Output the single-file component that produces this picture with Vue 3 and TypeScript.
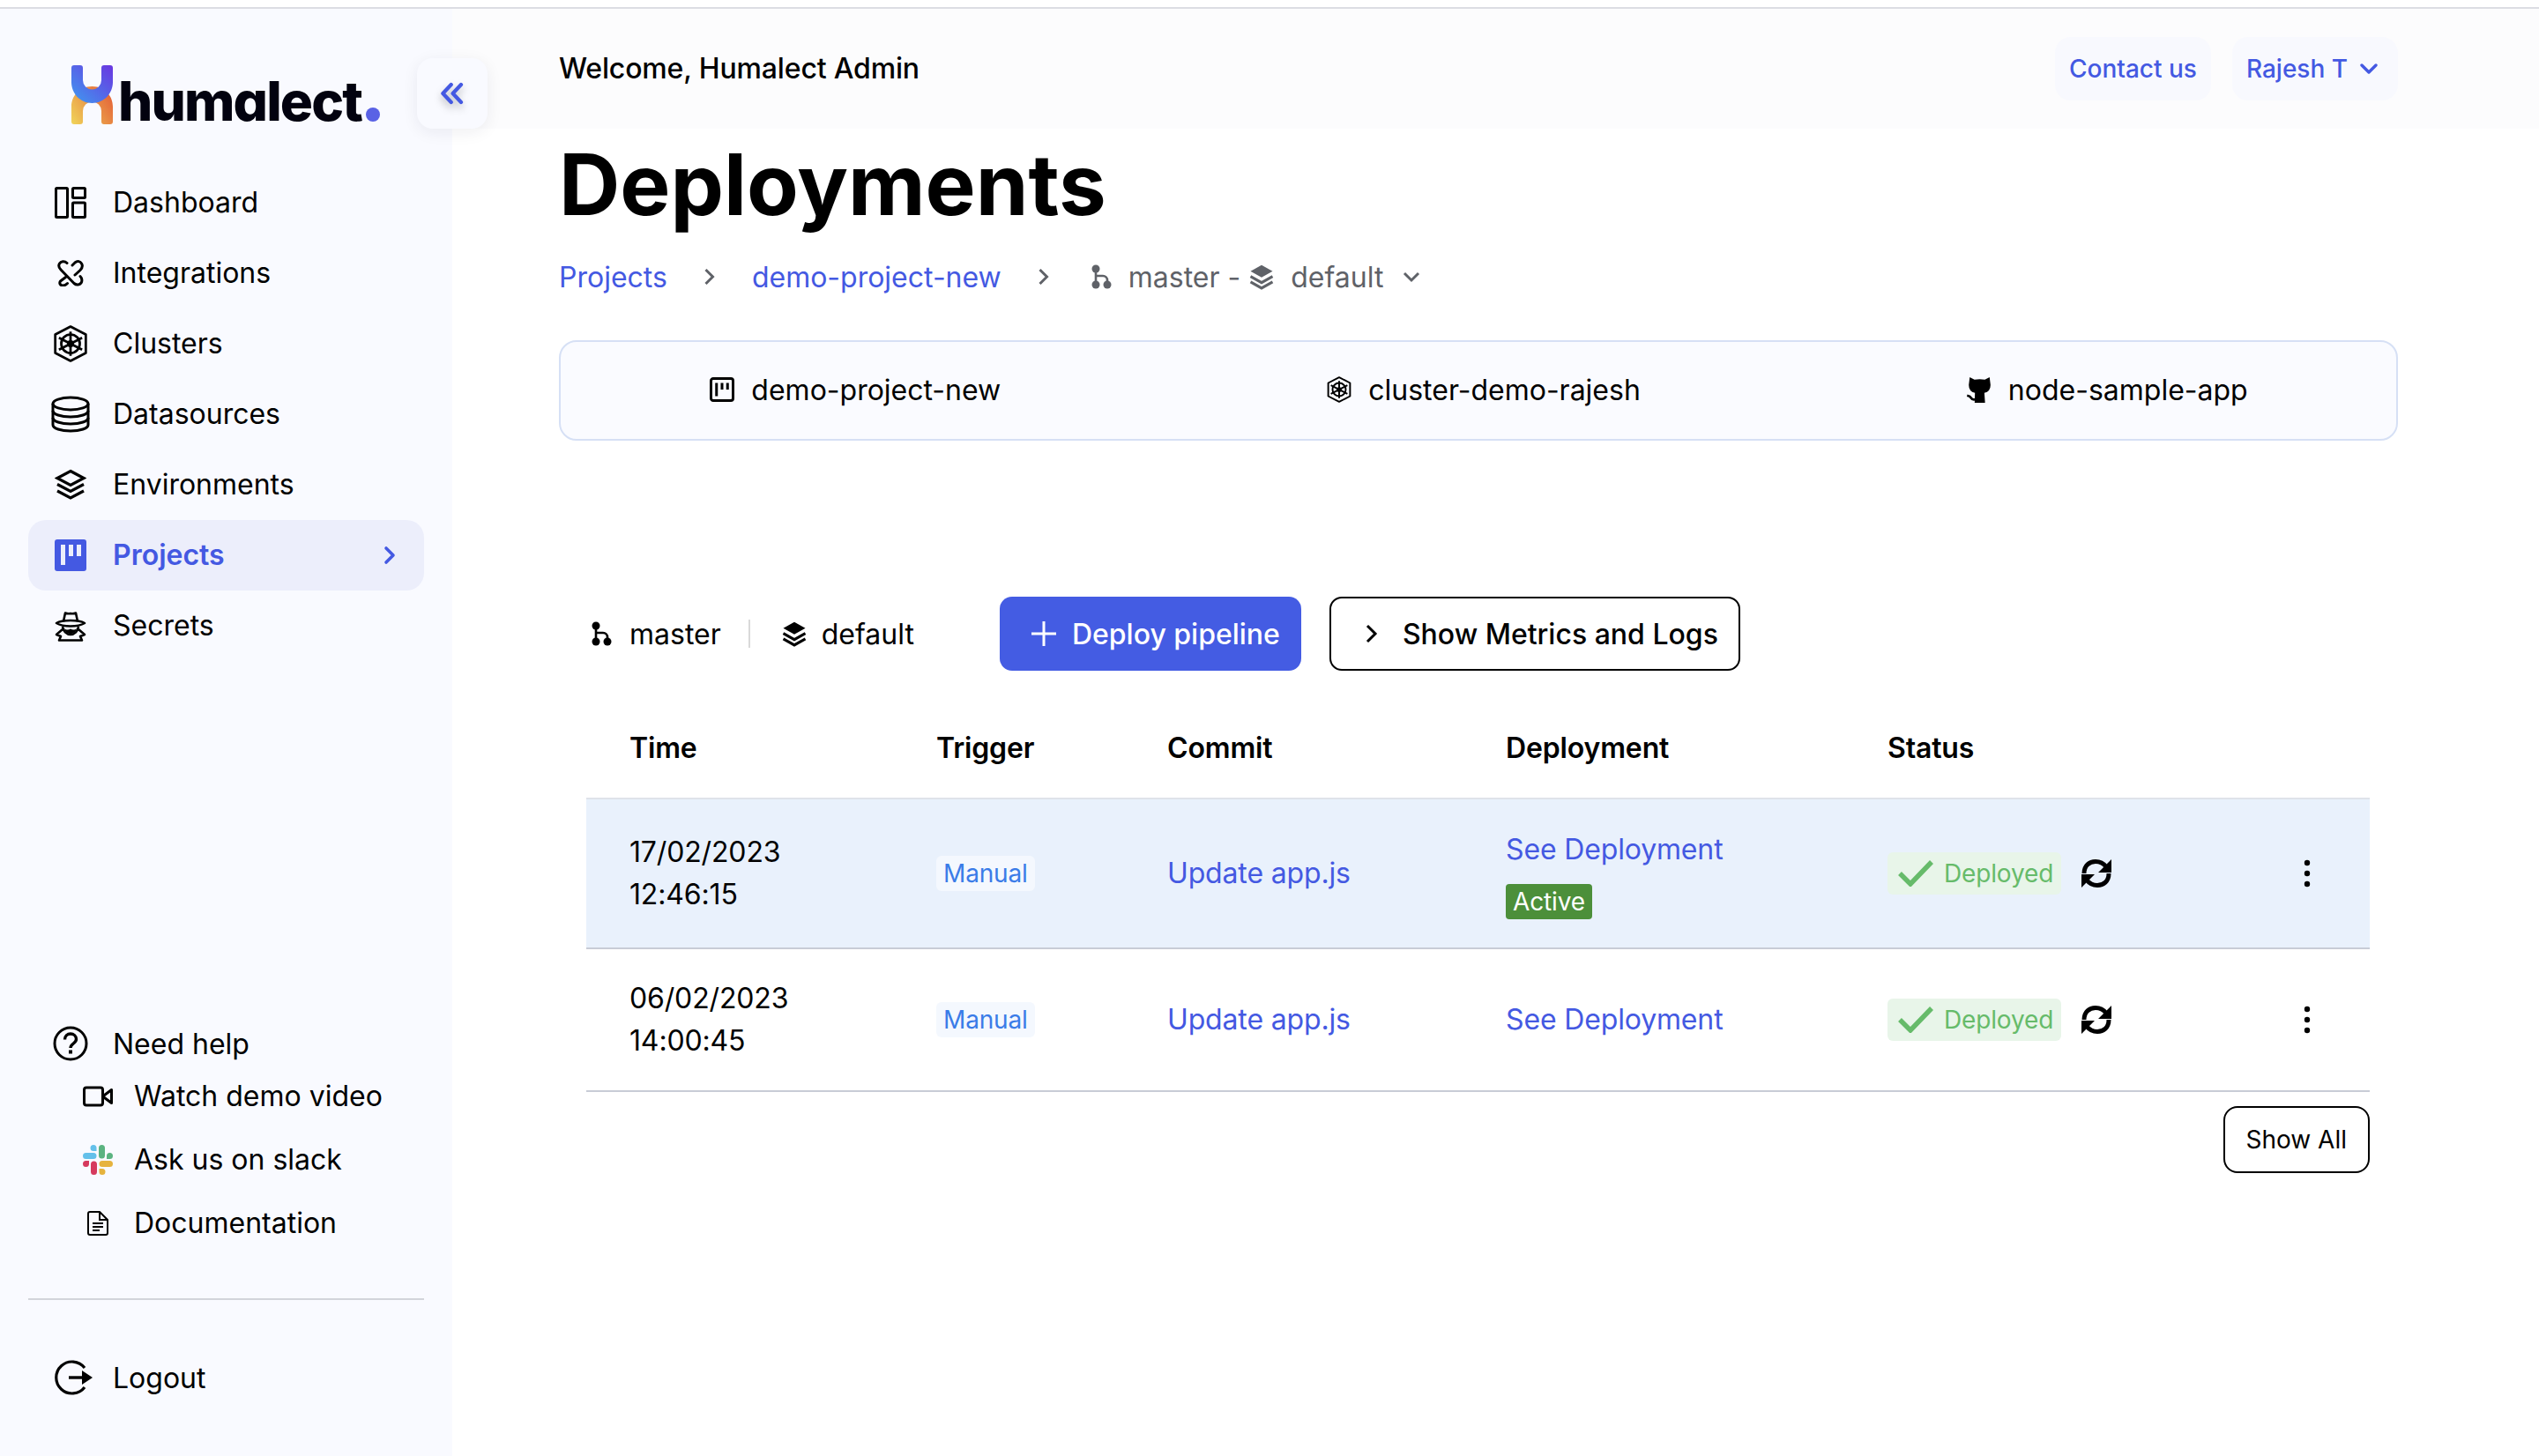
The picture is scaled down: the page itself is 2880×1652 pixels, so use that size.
<script setup lang="ts">
interface NavItem {
  label: string
  icon: string
  active?: boolean
}

interface Deployment {
  date: string
  time: string
  active: boolean
}

const navItems: NavItem[] = [
  { label: 'Dashboard', icon: 'dashboard' },
  { label: 'Integrations', icon: 'integrations' },
  { label: 'Clusters', icon: 'cluster' },
  { label: 'Datasources', icon: 'database' },
  { label: 'Environments', icon: 'layers' },
  { label: 'Projects', icon: 'board', active: true },
  { label: 'Secrets', icon: 'spy' },
]

const deployments: Deployment[] = [
  { date: '17/02/2023', time: '12:46:15', active: true },
  { date: '06/02/2023', time: '14:00:45', active: false },
]
</script>

<template>
  <div class="page">
    <!-- icon sprite -->
    <svg class="sprite" aria-hidden="true">
      <defs>
        <linearGradient id="logo-top" x1="0" y1="1" x2="1" y2="0">
          <stop offset="0" stop-color="#3f9bf0" />
          <stop offset="1" stop-color="#6a35e0" />
        </linearGradient>
        <linearGradient id="logo-bottom" x1="0" y1="1" x2="1" y2="0.400">
          <stop offset="0" stop-color="#f0d55a" />
          <stop offset="1" stop-color="#e5693a" />
        </linearGradient>
      </defs>
      <symbol id="i-dashboard" viewBox="0 0 36 36">
        <g fill="none" stroke="currentColor" stroke-width="3">
          <rect x="1.500" y="1.500" width="13" height="33" rx="1" />
          <rect x="20.500" y="1.500" width="14" height="11" rx="1" />
          <rect x="20.500" y="18" width="14" height="16.500" rx="1" />
        </g>
      </symbol>
      <symbol id="i-integrations" viewBox="0 0 30 30">
        <g fill="none" stroke="currentColor" stroke-width="3" stroke-linecap="round" stroke-linejoin="round">
          <path d="M11 3.500C8 .5 4 1.500 2.500 4S2 9 4 11L19 26.500c3 2.500 6.500 1.500 8-.5s1-5.500-1-7.500" />
          <path d="M17 6 20 3c3-2.500 6-1.500 7.500 1s.5 5.500-1.500 7.500L20 17" />
          <path d="M9.500 19.500 3.500 24c-1.500 2-.5 5 3 5 2 0 3.500-1 5-2.500" />
        </g>
      </symbol>
      <symbol id="i-cluster" viewBox="0 0 40 40">
        <g fill="none" stroke="currentColor" stroke-width="2.600" stroke-linejoin="round">
          <path d="M20 1.500 36.500 10v20L20 38.500 3.500 30V10Z" />
          <circle cx="20" cy="20" r="10" />
          <circle cx="20" cy="20" r="2.500" />
          <path d="M20 7v26M7.500 13.500l25 13M7.500 26.500l25-13" />
        </g>
      </symbol>
      <symbol id="i-database" viewBox="0 0 44 42">
        <g fill="none" stroke="currentColor" stroke-width="3">
          <ellipse cx="22" cy="9" rx="20" ry="7" />
          <path d="M2 9v24c0 4 9 7 20 7s20-3 20-7V9" />
          <path d="M2 17c0 4 9 7 20 7s20-3 20-7M2 25c0 4 9 7 20 7s20-3 20-7" />
        </g>
      </symbol>
      <symbol id="i-layers" viewBox="0 0 36 36">
        <g fill="none" stroke="currentColor" stroke-width="3.200" stroke-linejoin="miter">
          <path d="M18 2.500 33 10.500 18 18.500 3 10.500Z" />
          <path d="M3 17.500 18 25.500 33 17.500M3 25 18 33 33 25" />
        </g>
      </symbol>
      <symbol id="i-layers-solid" viewBox="0 0 36 36">
        <path d="M18 2 33 10.500 18 19 3 10.500Z" fill="currentColor" />
        <path d="M3 17.500 18 26 33 17.500M3 25 18 33.500 33 25" fill="none" stroke="currentColor" stroke-width="3.600" />
      </symbol>
      <symbol id="i-board" viewBox="0 0 36 36">
        <path fill-rule="evenodd" fill="currentColor" d="M3 0h30a3 3 0 0 1 3 3v30a3 3 0 0 1-3 3H3a3 3 0 0 1-3-3V3a3 3 0 0 1 3-3ZM7 6v23h5V6Zm9 0v13h5V6Zm9 0v13h5V6Z" />
      </symbol>
      <symbol id="i-board-line" viewBox="0 0 24 24">
        <rect x="2" y="2" width="20" height="20" rx="2" fill="none" stroke="currentColor" stroke-width="2.400" />
        <path d="M7 6v12M12 6v6M17 6v6" fill="none" stroke="currentColor" stroke-width="2.400" />
      </symbol>
      <symbol id="i-spy" viewBox="0 0 36 36">
        <g fill="none" stroke="currentColor" stroke-width="2.600" stroke-linejoin="round">
          <path d="M10 13 12 3.500c2 .8 4 1 6 .5 2 .5 4 .3 6-.5l2 9.500" />
          <path d="M2 15c4-2.500 10-3 16-3s12 .5 16 3c-4 2.500-10 3.500-16 3.500S6 17.500 2 15Z" />
          <path d="M9 19c.5 5 4.500 9 9 9s8.500-4 9-9" />
          <path d="M9 22 2 28l5 2-2 4.500h26L29 30l5-2-7-6" />
        </g>
        <path d="M11 21c2 2 5 2 7 .5 2 1.500 5 1.500 7-.5-1 4-4 6-7 6s-6-2-7-6Z" fill="currentColor" />
      </symbol>
      <symbol id="i-help" viewBox="0 0 40 40">
        <circle cx="20" cy="20" r="18" fill="none" stroke="currentColor" stroke-width="3" />
        <path d="M13.500 15.500c0-4 3-6.500 6.500-6.500s6.500 2.500 6.500 6c0 5-6.500 5-6.500 10" fill="none" stroke="currentColor" stroke-width="3.400" />
        <rect x="18" y="27.500" width="4" height="4" fill="currentColor" />
      </symbol>
      <symbol id="i-video" viewBox="0 0 34 24">
        <rect x="1.500" y="2" width="21" height="20" rx="2.500" fill="none" stroke="currentColor" stroke-width="3" />
        <path d="M22.500 12 32.500 4.500v15Z" fill="none" stroke="currentColor" stroke-width="3" stroke-linejoin="round" />
      </symbol>
      <symbol id="i-slack" viewBox="0 0 34 34">
        <path d="M12 0a3.500 3.500 0 1 0 0 7h3.500V3.500A3.500 3.500 0 0 0 12 0ZM3.500 9a3.500 3.500 0 0 0 0 7H12a3.500 3.500 0 0 0 0-7Z" fill="#64c0ea" />
        <path d="M34 12.500a3.500 3.500 0 1 0-7 0V16h3.500a3.500 3.500 0 0 0 3.500-3.500ZM25 3.500a3.500 3.500 0 0 0-7 0V12a3.500 3.500 0 0 0 7 0Z" fill="#5bb381" />
        <path d="M22 34a3.500 3.500 0 1 0 0-7h-3.500v3.500A3.500 3.500 0 0 0 22 34ZM30.500 25a3.500 3.500 0 0 0 0-7H22a3.500 3.500 0 0 0 0 7Z" fill="#e6b33e" />
        <path d="M0 21.500a3.500 3.500 0 1 0 7 0V18H3.500A3.500 3.500 0 0 0 0 21.500ZM9 30.500a3.500 3.500 0 0 0 7 0V22a3.500 3.500 0 0 0-7 0Z" fill="#d63a5e" />
      </symbol>
      <symbol id="i-doc" viewBox="0 0 24 28">
        <g fill="none" stroke="currentColor" stroke-width="2">
          <path d="M3 1h11l9 9v15a2 2 0 0 1-2 2H3a2 2 0 0 1-2-2V3a2 2 0 0 1 2-2Z" stroke-linejoin="round" />
          <path d="M14 1v9h9M6 14h12M6 18h12M6 22h8" />
        </g>
      </symbol>
      <symbol id="i-logout" viewBox="0 0 46 40">
        <path d="M36 9A18 18 0 1 0 36 31" fill="none" stroke="currentColor" stroke-width="3.200" />
        <path d="M18 20h16" stroke="currentColor" stroke-width="3.400" />
        <path d="M33 12l12 8-12 8Z" fill="currentColor" />
      </symbol>
      <symbol id="i-branch" viewBox="0 0 24 30">
        <circle cx="6" cy="6" r="4.500" fill="currentColor" />
        <circle cx="6" cy="24" r="4.500" fill="currentColor" />
        <circle cx="19" cy="24" r="4.500" fill="currentColor" />
        <path d="M6 6v18M6 14h8a5 5 0 0 1 5 5v5" fill="none" stroke="currentColor" stroke-width="2.600" />
      </symbol>
      <symbol id="i-github" viewBox="-1 0 27 28">
        <path fill="currentColor" d="M2.500 1 7.500 3.500Q13 2.500 18.500 3.500L23.500 1 24.500 9Q24.500 16 18 17.500L18.700 28H7.700L8 17.500Q1.500 16 1.500 9Z" />
        <path d="M-.3 20.300Q3 21 4 23t4 1.500" fill="none" stroke="currentColor" stroke-width="2.600" />
      </symbol>
      <symbol id="i-sync" viewBox="0 0 36 34">
        <g fill="none" stroke="currentColor" stroke-width="5">
          <path d="M4 17C4 8 10 3.500 17 3.500c5 0 9 2 12 6" />
          <path d="M32 17c0 9-6 13.500-13 13.500-5 0-9-2-12-6" />
        </g>
        <path d="M35 1v15H20Z M1 33V18h15Z" fill="currentColor" />
      </symbol>
    </svg>

    <div class="topline"></div>

    <div class="shell">
      <aside class="sidebar">
        <div class="logo">
          <svg class="logo-mark" viewBox="0 0 47 67">
            <path d="M0 64a3 3 0 0 0 3 3h7a3 3 0 0 0 3-3V52a10.500 10.500 0 0 1 21 0v12a3 3 0 0 0 3 3h7a3 3 0 0 0 3-3V47C47 35 38 24 23.500 24S0 35 0 47Z" fill="url(#logo-bottom)" />
            <path d="M3 0h7a3 3 0 0 1 3 3v14a10.500 10.500 0 0 0 21 0V3a3 3 0 0 1 3-3h7a3 3 0 0 1 3 3v16c0 13-10 24-23.500 24S0 32 0 19V3a3 3 0 0 1 3-3Z" fill="url(#logo-top)" />
          </svg>
          <span class="logo-text">humalect</span>
          <span class="logo-dot"></span>
        </div>

        <button class="collapse">
          <svg viewBox="0 0 24 24" width="30" height="30">
            <path d="M11 4 3.500 12l7.500 8M20 4l-7.500 8 7.500 8" fill="none" stroke="currentColor" stroke-width="3.400" stroke-linecap="round" stroke-linejoin="round" />
          </svg>
        </button>

        <nav class="nav">
          <a v-for="item in navItems" :key="item.label" class="nav-item" :class="{ active: item.active }">
            <span class="nav-icon">
              <svg :class="'ic-' + item.icon"><use :href="'#i-' + item.icon" /></svg>
            </span>
            <span>{{ item.label }}</span>
            <svg v-if="item.active" class="nav-arrow" viewBox="0 0 14 22">
              <path d="M3 3l8 8-8 8" fill="none" stroke="currentColor" stroke-width="3.600" stroke-linecap="round" stroke-linejoin="round" />
            </svg>
          </a>
        </nav>

        <div class="help">
          <div class="help-title">
            <span class="nav-icon"><svg class="ic-help"><use href="#i-help" /></svg></span>
            <span>Need help</span>
          </div>
          <a class="help-link">
            <span class="help-icon"><svg class="ic-video"><use href="#i-video" /></svg></span>
            Watch demo video
          </a>
          <a class="help-link">
            <span class="help-icon"><svg class="ic-slack"><use href="#i-slack" /></svg></span>
            Ask us on slack
          </a>
          <a class="help-link">
            <span class="help-icon"><svg class="ic-doc"><use href="#i-doc" /></svg></span>
            Documentation
          </a>
        </div>

        <div class="logout">
          <span class="nav-icon"><svg class="ic-logout"><use href="#i-logout" /></svg></span>
          <span>Logout</span>
        </div>
      </aside>

      <main class="main">
        <header class="header">
          <span class="welcome">Welcome, Humalect Admin</span>
          <div class="header-actions">
            <button class="header-btn">Contact us</button>
            <button class="header-btn user-btn">
              Rajesh T
              <svg viewBox="0 0 20 14" width="20" height="14">
                <path d="M2 3l8 8 8-8" fill="none" stroke="currentColor" stroke-width="3.400" stroke-linecap="round" stroke-linejoin="round" />
              </svg>
            </button>
          </div>
        </header>

        <div class="content">
          <h1>Deployments</h1>

          <div class="crumbs">
            <a class="crumb-link">Projects</a>
            <svg class="crumb-sep" viewBox="0 0 14 20"><path d="M2.500 2l8 8-8 8" fill="none" stroke="currentColor" stroke-width="3" /></svg>
            <a class="crumb-link">demo-project-new</a>
            <svg class="crumb-sep" viewBox="0 0 14 20"><path d="M2.500 2l8 8-8 8" fill="none" stroke="currentColor" stroke-width="3" /></svg>
            <svg class="crumb-branch"><use href="#i-branch" /></svg>
            <span class="crumb-master">master -</span>
            <svg class="crumb-layers"><use href="#i-layers-solid" /></svg>
            <span class="crumb-default">default</span>
            <svg class="crumb-down" viewBox="0 0 20 14"><path d="M2 3l8 8 8-8" fill="none" stroke="currentColor" stroke-width="3" /></svg>
          </div>

          <div class="info-card">
            <div class="info-item"><svg class="info-icon"><use href="#i-board-line" /></svg>demo-project-new</div>
            <div class="info-item"><svg class="info-icon"><use href="#i-cluster" /></svg>cluster-demo-rajesh</div>
            <div class="info-item"><svg class="info-icon"><use href="#i-github" /></svg>node-sample-app</div>
          </div>

          <div class="toolbar">
            <svg class="tool-branch"><use href="#i-branch" /></svg>
            <span class="tool-master">master</span>
            <span class="tool-divider"></span>
            <svg class="tool-layers"><use href="#i-layers-solid" /></svg>
            <span class="tool-default">default</span>
            <button class="btn-primary">
              <svg viewBox="0 0 30 30" width="30" height="30"><path d="M15 1v28M1 15h28" stroke="currentColor" stroke-width="3" /></svg>
              Deploy pipeline
            </button>
            <button class="btn-outline">
              <svg viewBox="0 0 16 24" width="16" height="24"><path d="M3 3l9 9-9 9" fill="none" stroke="currentColor" stroke-width="3" /></svg>
              Show Metrics and Logs
            </button>
          </div>

          <div class="table">
            <div class="t-head">
              <div class="c-time">Time</div>
              <div>Trigger</div>
              <div>Commit</div>
              <div>Deployment</div>
              <div>Status</div>
            </div>
            <div v-for="d in deployments" :key="d.date" class="t-row" :class="{ current: d.active }">
              <div class="c-time">{{ d.date }}<br />{{ d.time }}</div>
              <div class="c-trigger"><span class="manual">Manual</span></div>
              <div><a class="link">Update app.js</a></div>
              <div class="c-deploy">
                <a class="link">See Deployment</a>
                <span v-if="d.active" class="active-tag">Active</span>
              </div>
              <div class="c-status">
                <span class="deployed">
                  <svg viewBox="0 0 40 30" width="40" height="30"><path d="M2 15l12 12L38 2" fill="none" stroke="currentColor" stroke-width="5.500" /></svg>
                  Deployed
                </span>
                <svg class="sync"><use href="#i-sync" /></svg>
                <svg class="more" viewBox="0 0 8 32"><circle cx="4" cy="4" r="3.200" /><circle cx="4" cy="16" r="3.200" /><circle cx="4" cy="28" r="3.200" /></svg>
              </div>
            </div>
          </div>

          <div class="table-foot">
            <button class="show-all">Show All</button>
          </div>
        </div>
      </main>
    </div>
  </div>
</template>

<style scoped>
.page {
  width: 2880px;
  height: 1652px;
  display: flex;
  flex-direction: column;
  overflow: hidden;
  background: #fff;
  color: #000;
  font-family: Inter, "Liberation Sans", sans-serif;
  font-size: 32px;
}

.sprite {
  position: absolute;
  width: 0;
  height: 0;
}

.topline {
  height: 10px;
  flex: none;
  background: #fff;
  border-bottom: 2px solid #dcdde3;
  box-sizing: border-box;
}

.shell {
  flex: 1;
  display: flex;
  min-height: 0;
}

/* sidebar */
.sidebar {
  position: relative;
  width: 513px;
  flex: none;
  box-sizing: border-box;
  padding: 0 32px;
  display: flex;
  flex-direction: column;
  background: #f9faff;
}

.logo {
  display: flex;
  align-items: flex-end;
  height: 131px;
  padding: 64px 0 0 49px;
  box-sizing: border-box;
}

.logo-mark {
  width: 47px;
  height: 67px;
  flex: none;
}

.logo-text {
  margin-left: 6px;
  font-size: 62px;
  font-weight: 800;
  line-height: 52px;
  letter-spacing: -1.900px;
  font-feature-settings: "cv11";
  color: #02020f;
}

.logo-dot {
  width: 16px;
  height: 16px;
  margin: 0 0 3px 5px;
  border-radius: 50%;
  background: #5a62e5;
}

.collapse {
  position: absolute;
  top: 56px;
  left: 473px;
  width: 80px;
  height: 80px;
  padding: 0;
  display: flex;
  align-items: center;
  justify-content: center;
  border: 0;
  border-radius: 18px;
  background: #f9faff;
  color: #4459e2;
  box-shadow: 0 4px 18px rgba(30, 30, 60, 0.07);
  z-index: 2;
}

.collapse svg {
  filter: drop-shadow(0 5px 4px rgba(0, 0, 0, 0.25));
}

.nav {
  margin-top: 49px;
  display: flex;
  flex-direction: column;
}

.nav-item {
  height: 80px;
  display: flex;
  align-items: center;
  border-radius: 20px;
  line-height: 1;
}

.nav-item.active {
  background: #eceefb;
  color: #4459e2;
  font-weight: 600;
}

.nav-icon {
  width: 96px;
  flex: none;
  display: flex;
  align-items: center;
  justify-content: center;
}

.nav-icon svg {
  display: block;
  flex: none;
}

.ic-dashboard { width: 36px; height: 36px; }
.ic-integrations { width: 30px; height: 30px; }
.ic-cluster { width: 42px; height: 44px; }
.ic-database { width: 44px; height: 42px; }
.ic-layers { width: 36px; height: 36px; }
.ic-board { width: 36px; height: 36px; }
.ic-spy { width: 36px; height: 36px; }
.ic-help { width: 40px; height: 40px; }
.ic-logout { width: 46px; height: 40px; margin-left: 6px; }
.ic-video { width: 34px; height: 24px; }
.ic-slack { width: 34px; height: 34px; }
.ic-doc { width: 24px; height: 28px; }

.nav-arrow {
  width: 14px;
  height: 22px;
  margin-left: auto;
  margin-right: 32px;
}

.help {
  margin-top: auto;
  padding-bottom: 49px;
  border-bottom: 2px solid #d2d4da;
  display: flex;
  flex-direction: column;
}

.help-title {
  height: 40px;
  display: flex;
  align-items: center;
  margin-bottom: 4px;
}

.help-link {
  height: 72px;
  display: flex;
  align-items: center;
  line-height: 1;
}

.help-icon {
  width: 120px;
  flex: none;
  display: flex;
  align-items: center;
  justify-content: center;
  padding-left: 38px;
  box-sizing: border-box;
}

.help-icon svg {
  display: block;
}

.logout {
  height: 40px;
  display: flex;
  align-items: center;
  margin: 68px 0 69px;
}

/* main */
.main {
  flex: 1;
  min-width: 0;
  display: flex;
  flex-direction: column;
}

.header {
  height: 136px;
  flex: none;
  box-sizing: border-box;
  padding: 32px 160px 0 121px;
  display: flex;
  justify-content: space-between;
  align-items: flex-start;
  background: #fcfcfd;
}

.welcome {
  font-weight: 500;
  line-height: 72px;
  letter-spacing: -0.160px;
}

.header-actions {
  display: flex;
  gap: 24px;
}

.header-btn {
  height: 72px;
  padding: 0 16px;
  display: flex;
  align-items: center;
  gap: 14px;
  border: 0;
  border-radius: 18px;
  background: #f8f9fe;
  color: #4459e2;
  font-family: inherit;
  font-size: 28px;
  font-weight: 500;
}

.user-btn {
  padding-right: 23px;
}

.content {
  padding: 0 160px 0 121px;
}

h1 {
  margin: 15px 0 33px;
  font-size: 96px;
  font-weight: 700;
  line-height: 96px;
}

.crumbs {
  height: 48px;
  display: flex;
  align-items: center;
  color: #5f6268;
}

.crumb-link {
  color: #4459e2;
}

.crumb-sep {
  width: 14px;
  height: 20px;
  margin: 0 41px;
}

.crumb-branch {
  width: 24px;
  height: 30px;
  margin: 0 19px 0 5px;
}

.crumb-layers {
  width: 30px;
  height: 30px;
  margin: 0 18px 0 9px;
}

.crumb-down {
  width: 20px;
  height: 14px;
  margin-left: 22px;
}

.info-card {
  height: 114px;
  margin-top: 48px;
  box-sizing: border-box;
  display: flex;
  justify-content: center;
  align-items: center;
  gap: 369px;
  border: 2px solid #d6e0f5;
  border-radius: 20px;
  background: #fafbff;
}

.info-item {
  display: flex;
  align-items: center;
  gap: 18px;
  position: relative;
  top: -1px;
}

.info-icon {
  width: 30px;
  height: 30px;
}

.toolbar {
  margin-top: 177px;
  height: 84px;
  padding-left: 36px;
  display: flex;
  align-items: center;
}

.tool-branch {
  width: 24px;
  height: 30px;
  margin-right: 20px;
}

.tool-divider {
  width: 2px;
  height: 32px;
  margin: 0 35px 0 31px;
  background: #d9d9d9;
}

.tool-layers {
  width: 30px;
  height: 30px;
  margin-right: 16px;
}

.tool-default {
  margin-right: 97px;
}

.btn-primary,
.btn-outline {
  height: 84px;
  box-sizing: border-box;
  display: flex;
  align-items: center;
  border-radius: 14px;
  font-family: inherit;
  font-size: 32px;
}

.btn-primary {
  padding: 0 24px 0 35px;
  gap: 17px;
  border: 0;
  background: #445ce3;
  color: #fff;
  font-weight: 500;
}

.btn-outline {
  margin-left: 32px;
  padding: 0 23px 0 38px;
  gap: 27px;
  border: 2px solid #000;
  background: #fff;
  color: #000;
  font-weight: 500;
}

.table {
  margin: 0 32px 0 31px;
  letter-spacing: -0.150px;
}

.t-head,
.t-row {
  display: grid;
  grid-template-columns: 397px 262px 384px 433px 1fr;
  align-items: center;
}

.t-head {
  height: 146px;
  box-sizing: border-box;
  padding-top: 30px;
  border-bottom: 2px solid #dfe3ea;
  font-weight: 600;
}

.c-time {
  padding-left: 49px;
}

.t-row {
  box-sizing: border-box;
  height: 162px;
  border-bottom: 2px solid #c8ccd6;
  line-height: 48px;
}

.t-row.current {
  height: 170px;
  background: #e9f1fc;
}

.c-trigger {
  display: flex;
  align-items: center;
}

.manual {
  height: 40px;
  padding: 0 8px;
  border-radius: 6px;
  background: #f4f8fe;
  color: #3a7ce8;
  font-size: 28px;
  line-height: 40px;
}

.link {
  color: #4459e2;
}

.c-deploy {
  display: flex;
  flex-direction: column;
  align-items: flex-start;
}

.active-tag {
  height: 40px;
  margin-top: 15px;
  padding: 0 8px;
  border-radius: 4px;
  background: #4c8f3a;
  color: #fff;
  font-size: 28px;
  line-height: 40px;
}

.c-status {
  display: flex;
  align-items: center;
}

.deployed {
  height: 48px;
  padding: 0 9px 0 12px;
  display: flex;
  align-items: center;
  gap: 12px;
  border-radius: 6px;
  background: #e8f5e9;
  color: #66bb6a;
  font-size: 28px;
}

.sync {
  width: 36px;
  height: 34px;
  margin-left: 22px;
}

.more {
  width: 8px;
  height: 32px;
  margin-left: 217px;
}

.table-foot {
  margin: 16px 32px 0 0;
  display: flex;
  justify-content: flex-end;
}

.show-all {
  height: 76px;
  padding: 0 24px;
  border: 2px solid #000;
  border-radius: 16px;
  background: #fff;
  color: #000;
  font-family: inherit;
  font-size: 28px;
}
</style>
